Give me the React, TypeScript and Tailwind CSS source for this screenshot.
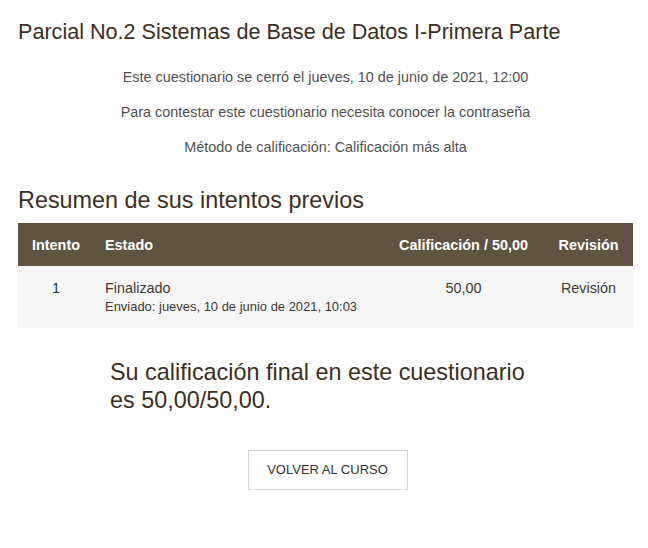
export default function App() {
  return (
    <div className="w-[648px] h-[548px] bg-white pl-[18px] pr-[15px] pt-[19px] font-['Liberation_Sans',Arial,sans-serif] text-[#4d4d4d]">
      <h2 className="text-[21.6px] leading-[26px] text-[#3b2f22] font-normal">Parcial No.2 Sistemas de Base de Datos I-Primera Parte</h2>
      <div className="mt-[22px] flex flex-col items-center gap-[15px] text-[14.4px] leading-[20px] text-[#505050]">
        <p>Este cuestionario se cerró el jueves, 10 de junio de 2021, 12:00</p>
        <p>Para contestar este cuestionario necesita conocer la contraseña</p>
        <p>Método de calificación: Calificación más alta</p>
      </div>
      <h3 className="mt-[29px] text-[23.4px] leading-[28px] text-[#3b2f22] font-normal">Resumen de sus intentos previos</h3>
      <div className="mt-[9px]">
        <div className="grid grid-cols-[76px_1fr_153px_93px] h-[43px] items-center bg-[#605342] text-white text-[14.4px] leading-[20px] font-bold">
          <div className="text-center">Intento</div>
          <div className="pl-[11px]">Estado</div>
          <div className="text-center">Calificación / 50,00</div>
          <div className="text-center pl-[4px]">Revisión</div>
        </div>
        <div className="grid grid-cols-[76px_1fr_153px_93px] h-[62px] bg-[#f6f6f6] pt-[12px] text-[14.4px] leading-[20px] text-[#3f3a35]">
          <div className="text-center text-[#1b2f4f]">1</div>
          <div className="pl-[11px]">
            <div>Finalizado</div>
            <div className="text-[12.96px] leading-[18px]">Enviado: jueves, 10 de junio de 2021, 10:03</div>
          </div>
          <div className="text-center">50,00</div>
          <div className="text-center pl-[4px]">Revisión</div>
        </div>
      </div>
      <div className="mx-auto mt-[30px] w-[431px] text-[23.4px] leading-[28px] text-[#3b2f22]">
        Su calificación final en este cuestionario es 50,00/50,00.
      </div>
      <div className="mt-[36px] flex justify-center pl-[4px]">
        <button className="w-[160px] h-[40px] border border-[#d3d3d8] bg-white text-[13px] text-[#333333]">VOLVER AL CURSO</button>
      </div>
    </div>
  );
}
